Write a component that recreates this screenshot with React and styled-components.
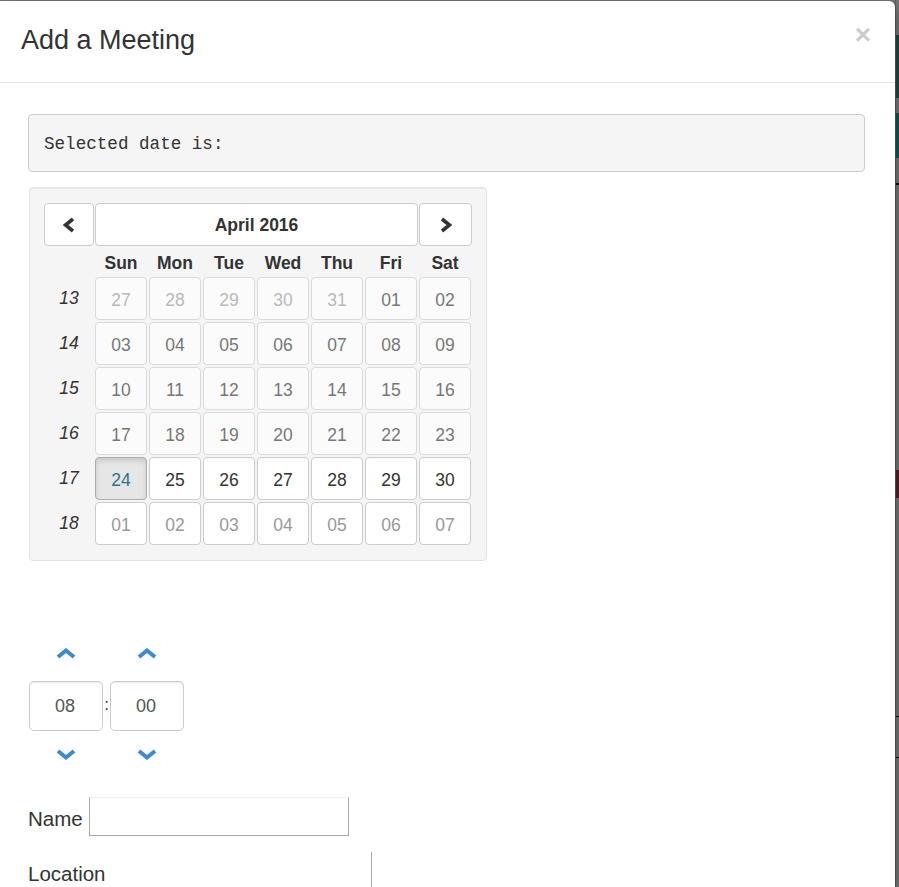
import React from 'react'
import styled, { createGlobalStyle, css } from 'styled-components'

const GlobalStyle = createGlobalStyle`
  html, body {
    margin: 0;
    padding: 0;
    background: #7a7a7a;
    overflow: hidden;
  }
  body {
    font-family: "Liberation Sans", Arial, sans-serif;
    color: #333;
  }
`

const weeks = [
  { num: 13, days: [['27', 'dm'], ['28', 'dm'], ['29', 'dm'], ['30', 'dm'], ['31', 'dm'], ['01', 'd'], ['02', 'd']] },
  { num: 14, days: ['03', '04', '05', '06', '07', '08', '09'].map(d => [d, 'd']) },
  { num: 15, days: ['10', '11', '12', '13', '14', '15', '16'].map(d => [d, 'd']) },
  { num: 16, days: ['17', '18', '19', '20', '21', '22', '23'].map(d => [d, 'd']) },
  { num: 17, days: [['24', 'a'], ['25', ''], ['26', ''], ['27', ''], ['28', ''], ['29', ''], ['30', '']] },
  { num: 18, days: ['01', '02', '03', '04', '05', '06', '07'].map(d => [d, 'm']) }
]

const dayNames = ['Sun', 'Mon', 'Tue', 'Wed', 'Thu', 'Fri', 'Sat']

const Chevron = ({ dir, color = '#3d8bcd', w = 20, h = 11, sw = 4 }) => {
  const pts = {
    up: `2,${h - 2} ${w / 2},2.5 ${w - 2},${h - 2}`,
    down: `2,2 ${w / 2},${h - 2.5} ${w - 2},2`,
    left: `${w - 2},2 2.5,${h / 2} ${w - 2},${h - 2}`,
    right: `2,2 ${w - 2.5},${h / 2} 2,${h - 2}`
  }[dir]
  return (
    <svg width={w} height={h} viewBox={`0 0 ${w} ${h}`}>
      <polyline points={pts} fill="none" stroke={color} strokeWidth={sw} strokeLinejoin="miter" strokeMiterlimit="10" />
    </svg>
  )
}

export default function App () {
  return (
    <Page>
      <GlobalStyle />
      <Modal>
        <Header>
          <Title>Add a Meeting</Title>
          <Close>×</Close>
        </Header>
        <Body>
          <Pre>Selected date is:</Pre>
          <Well>
            <Calendar>
              <NavButton><Chevron dir="left" color="#333" w={12} h={16} sw={3.6} /></NavButton>
              <MonthButton>April 2016</MonthButton>
              <NavButton $next><Chevron dir="right" color="#333" w={12} h={16} sw={3.6} /></NavButton>
              <DayHead />
              {dayNames.map(d => <DayHead key={d}>{d}</DayHead>)}
              {weeks.map(w => (
                <React.Fragment key={w.num}>
                  <WeekNum>{w.num}</WeekNum>
                  {w.days.map(([d, kind], i) => (
                    <Cell key={i}>
                      <DayButton
                        $disabled={kind.includes('d')}
                        $muted={kind.includes('m')}
                        $active={kind === 'a'}
                      >{d}</DayButton>
                    </Cell>
                  ))}
                </React.Fragment>
              ))}
            </Calendar>
          </Well>
          <TimeGrid>
            <Arrow $up><Chevron dir="up" /></Arrow>
            <span />
            <Arrow $up><Chevron dir="up" /></Arrow>
            <TimeInput>08</TimeInput>
            <Colon>:</Colon>
            <TimeInput>00</TimeInput>
            <Arrow><Chevron dir="down" /></Arrow>
            <span />
            <Arrow><Chevron dir="down" /></Arrow>
          </TimeGrid>
          <FieldRow>
            <Label>Name</Label>
            <TextInput />
          </FieldRow>
          <FieldRow $gap={16}>
            <Label>Location</Label>
            <TextInput $onlyRight />
          </FieldRow>
        </Body>
      </Modal>
      <Backdrop>
        <Band $top={35} $h={63} $c="#1f4b42" />
        <Band $top={113} $h={45} $c="#0c5d54" />
        <Band $top={183} $h={2} $c="#111" />
        <Band $top={470} $h={28} $c="#5b1f2d" />
        <Band $top={716} $h={1} $c="#111" />
        <Band $top={757} $h={1} $c="#111" />
      </Backdrop>
    </Page>
  )
}

const Page = styled.div`
  display: flex;
  height: 887px;
  width: 899px;
`
const Modal = styled.div`
  width: 895px;
  flex: none;
  margin-top: 1px;
  background: #fff;
  border-top-right-radius: 6px;
  box-shadow: 0 5px 15px rgba(0, 0, 0, 0.5);
  position: relative;
  z-index: 1;
  overflow: hidden;
`
const Header = styled.div`
  display: flex;
  align-items: flex-start;
  justify-content: space-between;
  height: 81px;
  padding: 0 24px 0 21px;
  border-bottom: 1px solid #e5e5e5;
`
const Title = styled.h4`
  margin: 25px 0 0;
  font-size: 27px;
  font-weight: 400;
  line-height: 1.1;
  color: #333;
`
const Close = styled.button`
  margin-top: 20px;
  padding: 0;
  border: 0;
  background: none;
  font-family: "Liberation Sans", Arial, sans-serif;
  font-size: 28px;
  font-weight: 700;
  line-height: 1;
  color: #000;
  opacity: 0.2;
`
const Body = styled.div`
  padding: 31px 30px 0 28px;
`
const Pre = styled.div`
  box-sizing: border-box;
  height: 58px;
  display: flex;
  align-items: center;
  padding: 2px 15px 0;
  font-family: Consolas, "Liberation Mono", monospace;
  font-size: 17.6px;
  color: #333;
  background: #f5f5f5;
  border: 1px solid #ccc;
  border-radius: 4px;
`
const Well = styled.div`
  margin-top: 15px;
  margin-left: 1px;
  width: 428px;
  padding: 15px 14px 14px;
  background: #f5f5f5;
  border: 1px solid #e3e3e3;
  border-radius: 4px;
  box-shadow: inset 0 1px 1px rgba(0, 0, 0, 0.05);
`
const Calendar = styled.div`
  display: grid;
  grid-template-columns: 50px repeat(7, 54px);
  grid-template-rows: 43px 30px;
  grid-auto-rows: 45px;
  font-size: 17.5px;
`
const btnBase = css`
  box-sizing: border-box;
  display: flex;
  align-items: center;
  justify-content: center;
  background: #fff;
  border: 1px solid #ccc;
  border-radius: 4px;
  color: #333;
  font-family: "Liberation Sans", Arial, sans-serif;
`
const NavButton = styled.div`
  ${btnBase}
  height: 43px;
  margin-left: ${p => (p.$next ? '1px' : '0')};
`
const MonthButton = styled.div`
  ${btnBase}
  grid-column: span 6;
  height: 43px;
  margin-left: 1px;
  padding-top: 2px;
  font-weight: 700;
  font-size: 17.5px;
`
const DayHead = styled.div`
  display: flex;
  align-items: center;
  justify-content: center;
  font-weight: 700;
  font-size: 17.5px;
  padding-top: 5px;
`
const WeekNum = styled.div`
  display: flex;
  align-items: center;
  justify-content: center;
  font-style: italic;
  font-size: 17.5px;
  padding-bottom: 1px;
`
const Cell = styled.div`
  padding: 1px;
`
const DayButton = styled.div`
  ${btnBase}
  height: 43px;
  padding-top: 3px;
  font-size: 17.5px;
  color: ${p => (p.$muted ? '#999' : '#333')};
  ${p => p.$disabled && css`
    opacity: 0.65;
  `}
  ${p => p.$active && css`
    color: #31708f;
    background: #e6e6e6;
    border-color: #adadad;
    box-shadow: inset 0 3px 5px rgba(0, 0, 0, 0.125);
  `}
`
const TimeGrid = styled.div`
  display: grid;
  grid-template-columns: 74px 7px 74px;
  grid-template-rows: 40px 50px 34px;
  margin-top: 80px;
  margin-left: 1px;
`
const Arrow = styled.div`
  display: flex;
  justify-content: center;
  align-items: flex-start;
  padding-top: ${p => (p.$up ? 7 : 18)}px;
`
const TimeInput = styled.div`
  box-sizing: border-box;
  height: 50px;
  display: flex;
  align-items: center;
  justify-content: center;
  border: 1px solid #ccc;
  border-radius: 5px;
  font-size: 18px;
  color: #555;
  padding-right: 2px;
  box-shadow: inset 0 1px 1px rgba(0, 0, 0, 0.075);
`
const Colon = styled.div`
  display: flex;
  align-items: center;
  justify-content: center;
  font-size: 17px;
  color: #333;
  padding-bottom: 2px;
`
const FieldRow = styled.div`
  display: flex;
  align-items: center;
  gap: 6px;
  margin-top: ${p => (p.$gap != null ? p.$gap : 32)}px;
`
const Label = styled.label`
  font-size: 20.5px;
  color: #333;
  padding-top: 4px;
`
const TextInput = styled.div`
  box-sizing: border-box;
  width: 260px;
  height: 39px;
  border: 1px solid #a9a9a9;
  border-top-color: #f0f0f0;
  ${p => p.$onlyRight && css`
    border: 0;
    border-right: 1px solid #a9a9a9;
  `}
`
const Backdrop = styled.div`
  flex: 1;
  position: relative;
  background: #7b7b7b;
  border-left: 1px solid #5e5e5e;
`
const Band = styled.div`
  position: absolute;
  left: 0;
  right: 0;
  top: ${p => p.$top}px;
  height: ${p => p.$h}px;
  background: ${p => p.$c};
`
